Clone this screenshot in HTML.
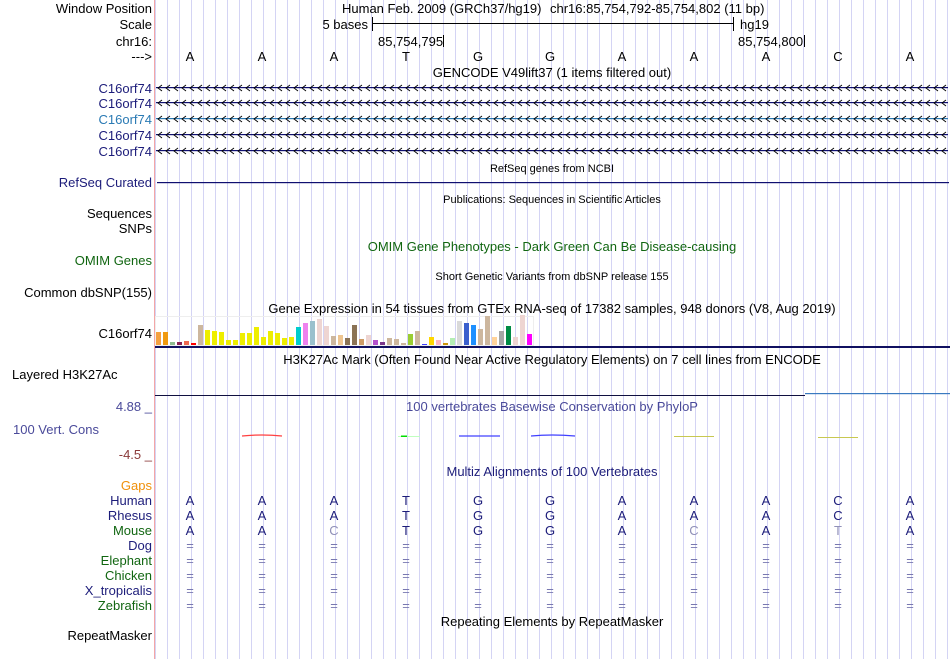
<!DOCTYPE html>
<html><head><meta charset="utf-8"><style>
html,body{margin:0;padding:0;background:#fff;}
svg{display:block;font-family:"Liberation Sans",sans-serif;}
</style></head><body>
<svg width="950" height="659" viewBox="0 0 950 659" xmlns="http://www.w3.org/2000/svg">
<defs>
<pattern id="grid" x="167" y="0" width="12" height="659" patternUnits="userSpaceOnUse">
<rect x="0" y="0" width="1" height="659" fill="#d4d4f4"/>
</pattern>
<pattern id="chev" x="157" y="0" width="8" height="10" patternUnits="userSpaceOnUse">
<path d="M5,2 L1,5 L5,8" fill="none" stroke="currentColor" stroke-width="0.9"/>
</pattern>
</defs>
<rect x="155" y="0" width="795" height="659" fill="url(#grid)"/>
<rect x="154" y="0" width="1" height="659" fill="#f4a6a6"/>

<g font-size="13" fill="#000">
<g text-anchor="end">
<text x="152" y="13">Window Position</text>
<text x="152" y="29">Scale</text>
<text x="152" y="46">chr16:</text>
<text x="152" y="61">---&gt;</text>
</g>
<text x="342" y="13">Human Feb. 2009 (GRCh37/hg19)</text>
<text x="550" y="13">chr16:85,754,792-85,754,802 (11 bp)</text>
<text x="368" y="29" text-anchor="end">5 bases</text>
<rect x="372" y="23" width="361" height="1" fill="#000"/>
<rect x="372" y="17" width="1" height="14" fill="#000"/>
<rect x="733" y="17" width="1" height="14" fill="#000"/>
<text x="740" y="29">hg19</text>
<text x="378" y="46">85,754,795</text>
<rect x="443" y="35" width="1" height="12" fill="#000"/>
<text x="738" y="46">85,754,800</text>
<rect x="804" y="35" width="1" height="12" fill="#000"/>
<g text-anchor="middle">
<text x="190" y="61">A</text><text x="262" y="61">A</text><text x="334" y="61">A</text><text x="406" y="61">T</text><text x="478" y="61">G</text><text x="550" y="61">G</text><text x="622" y="61">A</text><text x="694" y="61">A</text><text x="766" y="61">A</text><text x="838" y="61">C</text><text x="910" y="61">A</text>
<text x="552" y="77">GENCODE V49lift37 (1 items filtered out)</text>
</g>
</g>

<g font-size="13" text-anchor="end">
<text x="152" y="93" fill="#1c1c7a">C16orf74</text>
<text x="152" y="108" fill="#1c1c7a">C16orf74</text>
<text x="152" y="124" fill="#2a7ab4">C16orf74</text>
<text x="152" y="140" fill="#1c1c7a">C16orf74</text>
<text x="152" y="156" fill="#1c1c7a">C16orf74</text>
</g>
<g transform="translate(0,83)" style="color:#101070"><rect x="156" y="4" width="792" height="1.2" fill="#101070"/><rect x="156" y="0" width="792" height="10" fill="url(#chev)"/></g>
<g transform="translate(0,98)" style="color:#101070"><rect x="156" y="4" width="792" height="1.2" fill="#101070"/><rect x="156" y="0" width="792" height="10" fill="url(#chev)"/></g>
<g transform="translate(0,114)" style="color:#2a7ab4"><rect x="156" y="4" width="792" height="1.2" fill="#2a7ab4"/><rect x="156" y="0" width="792" height="10" fill="url(#chev)"/></g>
<g transform="translate(0,130)" style="color:#101070"><rect x="156" y="4" width="792" height="1.2" fill="#101070"/><rect x="156" y="0" width="792" height="10" fill="url(#chev)"/></g>
<g transform="translate(0,146)" style="color:#101070"><rect x="156" y="4" width="792" height="1.2" fill="#101070"/><rect x="156" y="0" width="792" height="10" fill="url(#chev)"/></g>

<g font-size="11" text-anchor="middle" fill="#000">
<text x="552" y="172">RefSeq genes from NCBI</text>
<text x="552" y="203">Publications: Sequences in Scientific Articles</text>
<text x="552" y="280">Short Genetic Variants from dbSNP release 155</text>
</g>
<text x="152" y="187" font-size="13" text-anchor="end" fill="#1c1c7a">RefSeq Curated</text>
<rect x="157" y="182" width="792" height="1.2" fill="#101070"/>
<g font-size="13" text-anchor="end" fill="#000">
<text x="152" y="218">Sequences</text>
<text x="152" y="233">SNPs</text>
<text x="152" y="297">Common dbSNP(155)</text>
<text x="152" y="338">C16orf74</text>
</g>
<text x="552" y="251" font-size="13" text-anchor="middle" fill="#116611">OMIM Gene Phenotypes - Dark Green Can Be Disease-causing</text>
<text x="152" y="265" font-size="13" text-anchor="end" fill="#116611">OMIM Genes</text>
<text x="552" y="313" font-size="13" text-anchor="middle" fill="#000">Gene Expression in 54 tissues from GTEx RNA-seq of 17382 samples, 948 donors (V8, Aug 2019)</text>

<rect x="155.5" y="316.5" width="378" height="29" fill="none" stroke="#eee" stroke-width="1"/>
<g>
<rect x="156" y="332" width="5" height="13" fill="#f4a040"/>
<rect x="163" y="332" width="5" height="13" fill="#f09a10"/>
<rect x="170" y="342" width="5" height="3" fill="#8fbc8f"/>
<rect x="177" y="342" width="5" height="3" fill="#8b2252"/>
<rect x="184" y="341" width="5" height="4" fill="#ee6a50"/>
<rect x="191" y="343" width="5" height="2" fill="#ff0000"/>
<rect x="198" y="325" width="5" height="20" fill="#cdb79e"/>
<rect x="205" y="330" width="5" height="15" fill="#eeee00"/>
<rect x="212" y="331" width="5" height="14" fill="#eeee00"/>
<rect x="219" y="332" width="5" height="13" fill="#eeee00"/>
<rect x="226" y="340" width="5" height="5" fill="#eeee00"/>
<rect x="233" y="340" width="5" height="5" fill="#eeee00"/>
<rect x="240" y="333" width="5" height="12" fill="#eeee00"/>
<rect x="247" y="333" width="5" height="12" fill="#eeee00"/>
<rect x="254" y="327" width="5" height="18" fill="#eeee00"/>
<rect x="261" y="337" width="5" height="8" fill="#eeee00"/>
<rect x="268" y="331" width="5" height="14" fill="#eeee00"/>
<rect x="275" y="333" width="5" height="12" fill="#eeee00"/>
<rect x="282" y="338" width="5" height="7" fill="#eeee00"/>
<rect x="289" y="337" width="5" height="8" fill="#eeee00"/>
<rect x="296" y="327" width="5" height="18" fill="#00cdcd"/>
<rect x="303" y="323" width="5" height="22" fill="#ee82ee"/>
<rect x="310" y="321" width="5" height="24" fill="#9ac0cd"/>
<rect x="317" y="319" width="5" height="26" fill="#eed5d2"/>
<rect x="324" y="326" width="5" height="19" fill="#eed5d2"/>
<rect x="331" y="336" width="5" height="9" fill="#cdb79e"/>
<rect x="338" y="335" width="5" height="10" fill="#eec591"/>
<rect x="345" y="338" width="5" height="7" fill="#8b7355"/>
<rect x="352" y="325" width="5" height="20" fill="#8b7355"/>
<rect x="359" y="339" width="5" height="6" fill="#cd9b65"/>
<rect x="366" y="335" width="5" height="10" fill="#eed5d2"/>
<rect x="373" y="340" width="5" height="5" fill="#b452cd"/>
<rect x="380" y="342" width="5" height="3" fill="#7a378b"/>
<rect x="387" y="338" width="5" height="7" fill="#cdb79e"/>
<rect x="394" y="339" width="5" height="6" fill="#cdb79e"/>
<rect x="401" y="343" width="5" height="2" fill="#cdb79e"/>
<rect x="408" y="334" width="5" height="11" fill="#9acd32"/>
<rect x="415" y="331" width="5" height="14" fill="#cdb79e"/>
<rect x="422" y="344" width="5" height="1" fill="#4040ff"/>
<rect x="429" y="337" width="5" height="8" fill="#ffd700"/>
<rect x="436" y="340" width="5" height="5" fill="#ffb6c1"/>
<rect x="443" y="343" width="5" height="2" fill="#cd950c"/>
<rect x="450" y="338" width="5" height="7" fill="#b4eeb4"/>
<rect x="457" y="321" width="5" height="24" fill="#d9d9d9"/>
<rect x="464" y="323" width="5" height="22" fill="#3a5fcd"/>
<rect x="471" y="325" width="5" height="20" fill="#1e90ff"/>
<rect x="478" y="329" width="5" height="16" fill="#cdb79e"/>
<rect x="485" y="316" width="5" height="29" fill="#cdb79e"/>
<rect x="492" y="337" width="5" height="8" fill="#ffd39b"/>
<rect x="499" y="331" width="5" height="14" fill="#a6a6a6"/>
<rect x="506" y="326" width="5" height="19" fill="#008b45"/>
<rect x="513" y="337" width="5" height="8" fill="#eed5d2"/>
<rect x="520" y="315" width="5" height="30" fill="#eed5d2"/>
<rect x="527" y="334" width="5" height="11" fill="#ff00ff"/>
</g>
<rect x="155" y="346" width="795" height="2" fill="#101060"/>

<text x="552" y="364" font-size="13" text-anchor="middle" fill="#000">H3K27Ac Mark (Often Found Near Active Regulatory Elements) on 7 cell lines from ENCODE</text>
<text x="12" y="379" font-size="13" fill="#000">Layered H3K27Ac</text>
<rect x="155" y="395" width="650" height="1" fill="#101040"/>
<rect x="805" y="393" width="145" height="1.2" fill="#3a7ac0"/>

<text x="152" y="411" font-size="13" text-anchor="end" fill="#4a4a9a">4.88 _</text>
<text x="552" y="411" font-size="13" text-anchor="middle" fill="#4a4a9a">100 vertebrates Basewise Conservation by PhyloP</text>
<text x="13" y="434" font-size="13" fill="#4a4a9a">100 Vert. Cons</text>
<text x="152" y="459" font-size="13" text-anchor="end" fill="#8b3a3a">-4.5 _</text>
<path d="M242,436 Q262,434 282,436" stroke="#ff4040" stroke-width="1.2" fill="none"/>
<rect x="398" y="436" width="22" height="1" fill="#c0ffc0"/><rect x="401" y="435.5" width="6" height="1.5" fill="#00dd00"/>
<path d="M459,436 L500,436" stroke="#4040ff" stroke-width="1.3" fill="none"/>
<path d="M531,436 Q552,434 575,436" stroke="#4040ff" stroke-width="1.3" fill="none"/>
<rect x="674" y="436" width="40" height="1" fill="#c8c850"/>
<rect x="818" y="437" width="40" height="1" fill="#c8c850"/>

<text x="552" y="476" font-size="13" text-anchor="middle" fill="#1c1c7a">Multiz Alignments of 100 Vertebrates</text>
<g font-size="13" text-anchor="end">
<text x="152" y="490" fill="#f0900a">Gaps</text>
<text x="152" y="505" fill="#1c1c7a">Human</text>
<text x="152" y="520" fill="#1c1c7a">Rhesus</text>
<text x="152" y="535" fill="#116611">Mouse</text>
<text x="152" y="550" fill="#1c1c7a">Dog</text>
<text x="152" y="565" fill="#116611">Elephant</text>
<text x="152" y="580" fill="#116611">Chicken</text>
<text x="152" y="595" fill="#1c1c7a">X_tropicalis</text>
<text x="152" y="610" fill="#116611">Zebrafish</text>
<text x="152" y="640" fill="#000">RepeatMasker</text>
</g>
<g font-size="13" text-anchor="middle" fill="#1c1c7a">
<text x="190" y="505">A</text><text x="262" y="505">A</text><text x="334" y="505">A</text><text x="406" y="505">T</text><text x="478" y="505">G</text><text x="550" y="505">G</text><text x="622" y="505">A</text><text x="694" y="505">A</text><text x="766" y="505">A</text><text x="838" y="505">C</text><text x="910" y="505">A</text>
<text x="190" y="520">A</text><text x="262" y="520">A</text><text x="334" y="520">A</text><text x="406" y="520">T</text><text x="478" y="520">G</text><text x="550" y="520">G</text><text x="622" y="520">A</text><text x="694" y="520">A</text><text x="766" y="520">A</text><text x="838" y="520">C</text><text x="910" y="520">A</text>
<text x="190" y="535">A</text><text x="262" y="535">A</text><text x="334" y="535" fill="#9090b8">C</text><text x="406" y="535">T</text><text x="478" y="535">G</text><text x="550" y="535">G</text><text x="622" y="535">A</text><text x="694" y="535" fill="#9090b8">C</text><text x="766" y="535">A</text><text x="838" y="535" fill="#9090b8">T</text><text x="910" y="535">A</text>
</g>
<g font-size="13" text-anchor="middle" fill="#7878b0">
<text x="190" y="550">=</text><text x="262" y="550">=</text><text x="334" y="550">=</text><text x="406" y="550">=</text><text x="478" y="550">=</text><text x="550" y="550">=</text><text x="622" y="550">=</text><text x="694" y="550">=</text><text x="766" y="550">=</text><text x="838" y="550">=</text><text x="910" y="550">=</text>
<text x="190" y="565">=</text><text x="262" y="565">=</text><text x="334" y="565">=</text><text x="406" y="565">=</text><text x="478" y="565">=</text><text x="550" y="565">=</text><text x="622" y="565">=</text><text x="694" y="565">=</text><text x="766" y="565">=</text><text x="838" y="565">=</text><text x="910" y="565">=</text>
<text x="190" y="580">=</text><text x="262" y="580">=</text><text x="334" y="580">=</text><text x="406" y="580">=</text><text x="478" y="580">=</text><text x="550" y="580">=</text><text x="622" y="580">=</text><text x="694" y="580">=</text><text x="766" y="580">=</text><text x="838" y="580">=</text><text x="910" y="580">=</text>
<text x="190" y="595">=</text><text x="262" y="595">=</text><text x="334" y="595">=</text><text x="406" y="595">=</text><text x="478" y="595">=</text><text x="550" y="595">=</text><text x="622" y="595">=</text><text x="694" y="595">=</text><text x="766" y="595">=</text><text x="838" y="595">=</text><text x="910" y="595">=</text>
<text x="190" y="610">=</text><text x="262" y="610">=</text><text x="334" y="610">=</text><text x="406" y="610">=</text><text x="478" y="610">=</text><text x="550" y="610">=</text><text x="622" y="610">=</text><text x="694" y="610">=</text><text x="766" y="610">=</text><text x="838" y="610">=</text><text x="910" y="610">=</text>
</g>
<text x="552" y="626" font-size="13" text-anchor="middle" fill="#000">Repeating Elements by RepeatMasker</text>
</svg>
</body></html>
